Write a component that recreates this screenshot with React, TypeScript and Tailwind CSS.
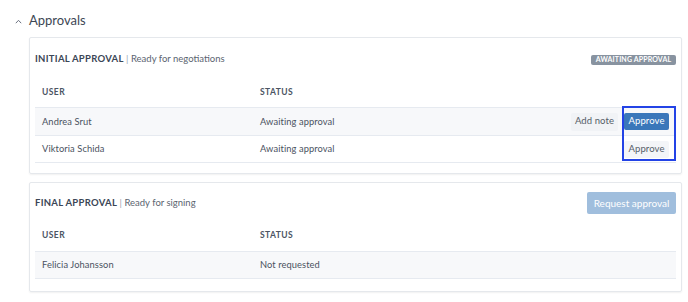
import React from 'react';

interface Row {
  user: string;
  status: string;
  actions?: 'both' | 'approve';
}

const initialRows: Row[] = [
  { user: 'Andrea Srut', status: 'Awaiting approval', actions: 'both' },
  { user: 'Viktoria Schida', status: 'Awaiting approval', actions: 'approve' },
];

const finalRows: Row[] = [{ user: 'Felicia Johansson', status: 'Not requested' }];

const TableHead: React.FC<{ className: string }> = ({ className }) => (
  <div className={`flex items-center text-[8.5px] font-bold tracking-[0.05em] text-[#4b5563] ${className}`}>
    <span className="pl-[7px] w-[225px]">USER</span>
    <span>STATUS</span>
  </div>
);

const TableRow: React.FC<{ row: Row; shaded: boolean; last: boolean }> = ({ row, shaded, last }) => (
  <div
    className={`flex items-center h-[28px] border-t border-[#e6eaf0] text-[9.3px] tracking-[0.01em] text-[#4a5260] ${
      shaded ? 'bg-[#f7f8fa]' : 'bg-white'
    } ${last ? 'border-b' : ''}`}
  >
    <span className="pl-[7px] w-[225px]">{row.user}</span>
    <span className="flex-1">{row.status}</span>
    <div className="flex items-center gap-[6px] pr-[7px]">
      {row.actions === 'both' && (
        <button className="h-[18px] w-[47px] rounded-[2px] bg-[#f1f3f6] text-[9.5px] text-[#555d68]">Add note</button>
      )}
      {row.actions === 'both' && (
        <button className="h-[17px] w-[45px] rounded-[2px] bg-[#3a77ba] text-[9.5px] text-white">Approve</button>
      )}
      {row.actions === 'approve' && (
        <button className="h-[17px] w-[45px] mt-[1px] rounded-[2px] bg-[#f3f5f8] text-[9.5px] text-[#555d68]">Approve</button>
      )}
    </div>
  </div>
);

export default function App() {
  return (
    <div className="w-[688px] h-[302px] bg-white font-['Lato',sans-serif] overflow-hidden">
      {/* Section heading */}
      <div className="flex items-center h-[24px] mt-[9px] pl-[15px]">
        <svg width="7" height="5" viewBox="0 0 7 5" className="mr-[7px]">
          <path d="M0.8 4.2 L3.5 1.3 L6.2 4.2" fill="none" stroke="#6b7280" strokeWidth="1" />
        </svg>
        <span className="text-[13px] text-[#3d4754]">Approvals</span>
      </div>

      <div className="ml-[29px] mr-[6px] mt-[4px] flex flex-col gap-[8px]">
        {/* Initial approval */}
        <div className="relative border border-[#e5e8ec] rounded-[2px] shadow-[0_1px_2px_rgba(0,0,0,0.06)] px-[5px] pb-[10px]">
          <div className="flex items-center justify-between h-[43px]">
            <span className="text-[9.5px] text-[#3b4656]">
              <span className="font-bold tracking-[0.03em]">INITIAL APPROVAL</span>
              <span className="text-[#9aa3ae]"> | </span>
              <span className="text-[#5b6470]">Ready for negotiations</span>
            </span>
            <span className="flex items-center justify-center h-[10px] w-[85px] rounded-[2px] bg-[#8893a0] text-[7px] font-bold tracking-[0.02em] text-white">
              AWAITING APPROVAL
            </span>
          </div>
          <TableHead className="h-[26px] pb-[4px]" />
          {initialRows.map((r, i) => (
            <TableRow key={r.user} row={r} shaded={i === 0} last={i === initialRows.length - 1} />
          ))}
          {/* highlight annotation */}
          <div className="absolute left-[592px] top-[68px] w-[54px] h-[55px] border-2 border-[#2343e6] pointer-events-none" />
        </div>

        {/* Final approval */}
        <div className="border border-[#e5e8ec] rounded-[2px] shadow-[0_1px_2px_rgba(0,0,0,0.06)] px-[5px] pb-[12px]">
          <div className="flex items-center justify-between h-[40px]">
            <span className="text-[9.5px] text-[#3b4656]">
              <span className="font-bold tracking-[0.03em]">FINAL APPROVAL</span>
              <span className="text-[#9aa3ae]"> | </span>
              <span className="text-[#5b6470]">Ready for signing</span>
            </span>
            <button className="h-[22px] w-[89px] rounded-[2px] bg-[#a0bedd] text-[10px] text-white">Request approval</button>
          </div>
          <TableHead className="h-[28px] pb-[3px]" />
          {finalRows.map((r, i) => (
            <TableRow key={r.user} row={r} shaded last={i === finalRows.length - 1} />
          ))}
        </div>
      </div>
    </div>
  );
}
